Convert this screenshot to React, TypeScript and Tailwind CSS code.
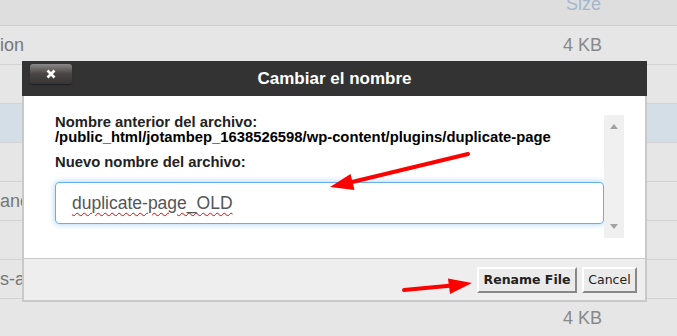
const rows = [
  { name: "ion", size: "4 KB", selected: false },
  { name: "", size: "", selected: false },
  { name: "", size: "", selected: true },
  { name: "", size: "", selected: false },
  { name: "ance", size: "", selected: false },
  { name: "", size: "", selected: false },
  { name: "s-a", size: "", selected: false },
  { name: "", size: "4 KB", selected: false },
];

export default function App() {
  return (
    <div className="relative h-[336px] w-[677px] overflow-hidden bg-[#e3e3e3] font-['Liberation_Sans',Arial,sans-serif]">
      {/* file list behind the modal */}
      <div className="flex h-[26px] border-b border-[#cfcfcf] bg-[#dedede] text-[18px] text-[#a3b7cb]">
        <div className="w-[566px] shrink-0" />
        <span className="-mt-[6px] leading-[20px]">Size</span>
      </div>
      {rows.map((row, i) => (
        <div
          key={i}
          className={`flex h-[39px] items-center border-b border-[#d2d2d2] text-[18px] ${
            row.selected ? "bg-[#d4dee6]" : "bg-[#e6e6e6]"
          }`}
        >
          <div className="w-[563px] shrink-0 text-[#777]">{row.name}</div>
          <div className="text-[#888]">{row.size}</div>
        </div>
      ))}

      {/* rename dialog */}
      <div className="absolute left-[22px] top-[61px] flex w-[625px] flex-col">
        <div className="relative flex h-[35px] items-center justify-center bg-[#333]">
          <button className="absolute left-[8px] top-[3px] flex h-[20px] w-[42px] items-center justify-center rounded-[3px] bg-gradient-to-b from-[#8a8a8a] via-[#4a4444] to-[#3a3535] shadow-[0_1px_1px_#1b1f22]">
            <svg width="10" height="10" viewBox="0 0 10 10">
              <path d="M1.5 1.5 L8.5 8.5 M8.5 1.5 L1.5 8.5" stroke="#fff" strokeWidth="2.6" />
            </svg>
          </button>
          <span className="text-[17px] font-bold text-white">Cambiar el nombre</span>
        </div>

        <div className="flex border-x-2 border-[#c9c9c9] bg-white pb-[20px] pl-[20px] pr-[21px] pt-[19px]">
          <div className="flex-1 pl-[11px] text-[14.8px] font-bold leading-[15px]">
            <div className="text-[#222]">Nombre anterior del archivo:</div>
            <div className="text-black">/public_html/jotambep_1638526598/wp-content/plugins/duplicate-page</div>
            <div className="mt-[10px] text-[#222]">Nuevo nombre del archivo:</div>
            <div className="mt-[12px] flex h-[42px] items-center rounded-[4px] border border-[#66afe9] pl-[16px] text-[17.5px] font-normal text-[#555] shadow-[0_0_6px_rgba(102,175,233,0.6)]">
              <span className="underline decoration-[#e00] decoration-wavy decoration-1 underline-offset-[3px]">
                duplicate-page_OLD
              </span>
            </div>
          </div>
          <div className="flex h-[123px] w-[20px] flex-col items-center justify-between bg-[#f0f0f0] py-[9px]">
            <div className="h-0 w-0 border-x-[4px] border-b-[5px] border-x-transparent border-b-[#a3a3a3]" />
            <div className="h-0 w-0 border-x-[4px] border-t-[5px] border-x-transparent border-t-[#a3a3a3]" />
          </div>
        </div>

        <div className="flex justify-end gap-[5px] border-x-2 border-b-2 border-t border-[#c9c9c9] bg-[#eeeeee] pb-[7px] pr-[8px] pt-[8px] font-['DejaVu_Sans',Verdana,sans-serif] text-[12.5px] text-[#222]">
          <button className="h-[26px] w-[100px] border-2 border-b-[#888] border-l-white border-r-[#888] border-t-white bg-[#ebebeb] font-bold">
            Rename File
          </button>
          <button className="h-[26px] w-[55px] border-2 border-b-[#888] border-l-white border-r-[#888] border-t-white bg-[#ebebeb]">
            Cancel
          </button>
        </div>
      </div>

      {/* red annotation arrows */}
      <svg className="pointer-events-none absolute inset-0" width="677" height="336">
        <line x1="468" y1="154" x2="350" y2="182.5" stroke="#f00" strokeWidth="4" strokeLinecap="round" />
        <polygon points="330,187 350.5,174 354.5,190" fill="#f00" />
        <line x1="404" y1="290" x2="452" y2="285.5" stroke="#f00" strokeWidth="4" strokeLinecap="round" />
        <polygon points="472,283 448,278.5 450,294" fill="#f00" />
      </svg>
    </div>
  );
}
